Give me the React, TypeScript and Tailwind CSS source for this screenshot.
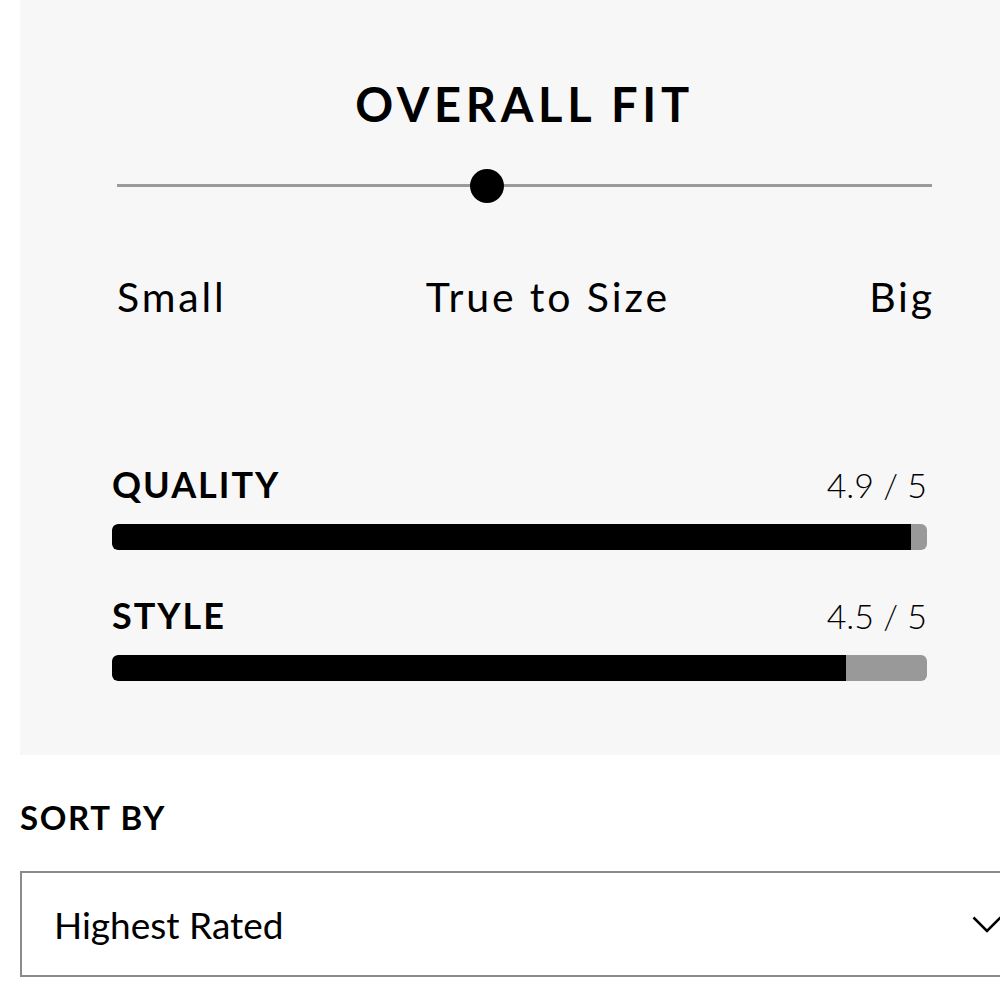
import React from "react";

const ratings = [
  { label: "QUALITY", value: 4.9 },
  { label: "STYLE", value: 4.5 },
];

function RatingBar({ label, value }: { label: string; value: number }) {
  return (
    <div className="mb-[43px]">
      <div className="flex items-end justify-between h-[40px]">
        <span className="text-[36px] font-bold tracking-[0.055em] leading-none text-black">
          {label}
        </span>
        <span className="text-[34px] font-light leading-none text-black">
          {value} / 5
        </span>
      </div>
      <div className="mt-[22px] h-[26px] w-full rounded-[6px] bg-[#999999] overflow-hidden">
        <div
          className="h-full bg-black rounded-l-[6px]"
          style={{ width: `${(value / 5) * 100}%` }}
        />
      </div>
    </div>
  );
}

export default function App() {
  return (
    <div className="min-h-screen w-[1000px] overflow-hidden bg-white font-['Lato',sans-serif] text-black">
      {/* rating summary panel */}
      <div className="ml-[20px] h-[755px] bg-[#f7f7f7] pt-[81px]">
        <div className="ml-[97px] w-[815px]">
          <h2 className="text-center text-[47px] font-bold tracking-[0.1em] leading-none">
            OVERALL FIT
          </h2>
          <div className="relative mt-[41px] h-[34px]">
            <div className="absolute left-0 right-0 top-[15px] h-[3px] bg-[#9a9a9a]" />
            <div className="absolute left-[353px] top-0 h-[34px] w-[34px] rounded-full bg-black" />
          </div>
          <div className="mt-[73px] flex justify-between text-[41px] font-normal tracking-[0.07em] leading-none">
            <span>Small</span>
            <span>True to Size</span>
            <span className="-mr-[3px]">Big</span>
          </div>
        </div>
        <div className="ml-[92px] mt-[145px] w-[815px]">
          {ratings.map((r) => (
            <RatingBar key={r.label} label={r.label} value={r.value} />
          ))}
        </div>
      </div>

      {/* sort */}
      <div className="pl-[20px]">
        <div className="mt-[46px] text-[33px] font-bold tracking-[0.05em] leading-none">
          SORT BY
        </div>
        <div className="mt-[37px] flex h-[106px] w-[1010px] items-center justify-between border-2 border-[#8a8a8a] pl-[32px] pr-[26px]">
          <span className="text-[37px] leading-none">Highest Rated</span>
          <svg width="30" height="17" viewBox="0 0 30 17" fill="none">
            <path d="M1.5 1.5 L15 15 L28.5 1.5" stroke="black" strokeWidth="2.5" />
          </svg>
        </div>
      </div>
    </div>
  );
}
